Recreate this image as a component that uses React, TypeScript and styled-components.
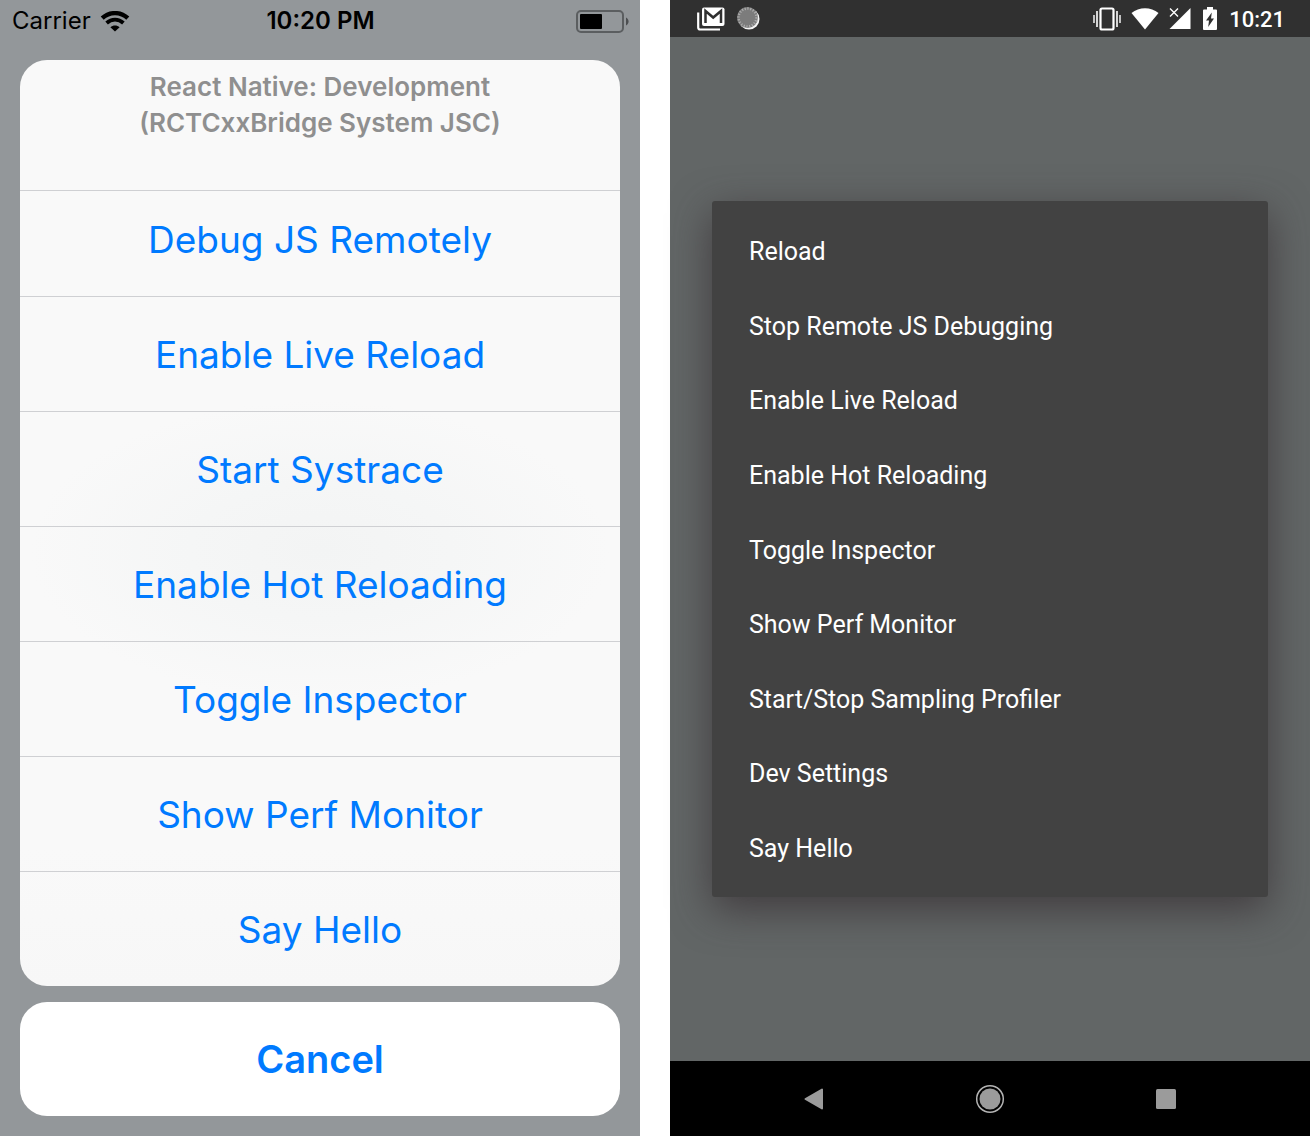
import React from "react";
import styled, { createGlobalStyle } from "styled-components";

const GlobalStyle = createGlobalStyle`
  *, *::before, *::after { box-sizing: border-box; }
  body { margin: 0; background: #fff; }
  button { margin: 0; padding: 0; border: 0; background: none; font: inherit; color: inherit; cursor: pointer; }
  h2, ul { margin: 0; padding: 0; font: inherit; list-style: none; }
  svg { display: block; flex: none; }
`;

const Page = styled.div`
  display: grid;
  grid-template-columns: 1fr 1fr;
  column-gap: 30px;
  min-height: 100vh;
`;

/* iOS */

const IosScreen = styled.section`
  display: flex;
  flex-direction: column;
  background: #93979a;
  color: #000;
  font-family: Inter, "Liberation Sans", sans-serif;
`;

const IosStatus = styled.header`
  display: grid;
  grid-template-columns: 1fr auto 1fr;
  align-items: center;
  height: 42px;
  padding: 0 11px 0 12px;
  margin-bottom: 18px;
  font-size: 24px;
  line-height: 42px;
`;

const Carrier = styled.div`
  display: flex;
  align-items: center;
  gap: 9px;
`;

const IosTime = styled.time`
  font-weight: 600;
`;

const BatterySlot = styled.div`
  justify-self: end;
`;

const Sheet = styled.div`
  display: flex;
  flex: 1;
  flex-direction: column;
  gap: 16px;
  padding: 0 20px 20px;
`;

const Actions = styled.div`
  display: flex;
  flex: 1;
  flex-direction: column;
  overflow: hidden;
  border-radius: 27px;
  background:
    radial-gradient(ellipse 290px 150px at 50% 53%, #f3f4f4 0%, #f5f6f6 45%, rgba(248, 248, 248, 0) 100%),
    linear-gradient(#f9f9f9 0%, #f9f9f9 85%, #f7f7f7 100%);
`;

const SheetTitle = styled.h2`
  min-height: 130px;
  padding: 9px 100px 0;
  color: #8f8f8f;
  font-size: 26px;
  font-weight: 600;
  line-height: 36px;
  text-align: center;
`;

const Action = styled.button<{ $first?: boolean }>`
  padding: ${(p) => (p.$first ? 25 : 34)}px 20px 32px;
  border-top: 1px solid #cfd0d3;
  color: #007aff;
  font-size: 37px;
  line-height: 48px;
  text-align: center;
`;

const Cancel = styled.button`
  padding: 33px 20px;
  border-radius: 27px;
  background: #fff;
  color: #007aff;
  font-size: 38px;
  font-weight: 600;
  line-height: 48px;
`;

/* Android */

const DroidScreen = styled.section`
  display: flex;
  flex-direction: column;
  background: #626666;
  color: #fff;
  font-family: Roboto, "Liberation Sans", sans-serif;
`;

const DroidStatus = styled.header`
  display: flex;
  align-items: center;
  justify-content: space-between;
  height: 37px;
  padding: 0 25px 0 27px;
  background: #303030;
`;

const IconRow = styled.div<{ $gap: number }>`
  display: flex;
  align-items: center;
  gap: ${(p) => p.$gap}px;
`;

const DroidTime = styled.time`
  padding-top: 3px;
  font-size: 22px;
  font-weight: 500;
  line-height: 34px;
`;

const Dialog = styled.ul`
  display: flex;
  flex: 1;
  flex-direction: column;
  margin: 164px 42px;
  padding: 14px 0 11px;
  border-radius: 3px;
  background: #424242;
  box-shadow: 0 12px 40px rgba(54, 46, 50, 0.75);
`;

const DialogRow = styled.li`
  display: flex;
  flex: 1;
`;

const DialogItem = styled.button`
  flex: 1;
  padding: 0 37px;
  font-size: 25px;
  line-height: 32px;
  text-align: left;
`;

const NavBar = styled.nav`
  display: flex;
  align-items: center;
  justify-content: center;
  gap: 146px;
  height: 75px;
  background: #000;
`;

const NavButton = styled.button`
  display: flex;
  align-items: center;
  justify-content: center;
  width: 30px;
  height: 48px;
`;

const IosWifi = () => (
  <svg width="30" height="21" viewBox="0 0 30 21" fill="none" stroke="#000" aria-hidden="true">
    <path d="M2.200 7.200C9.500.4 20.500.4 27.800 7.200" strokeWidth="4.400" />
    <path d="M6.600 12c4.900-4.500 11.900-4.500 16.800 0" strokeWidth="3.800" />
    <path d="M10.400 16.200c2.600-2.400 6.600-2.400 9.200 0L15 20.600z" fill="#000" stroke="none" />
  </svg>
);

const IosBattery = () => (
  <svg width="53" height="23" viewBox="0 0 53 23" aria-hidden="true">
    <rect x="1" y="1" width="46" height="21" rx="4" fill="none" stroke="#5b5e60" strokeWidth="2" />
    <rect x="4" y="4" width="22" height="15" rx="1" fill="#000" />
    <path d="M50 7.500c3.400 1.500 3.400 6.500 0 8z" fill="#4c4e50" />
  </svg>
);

const MailIcon = () => (
  <svg width="28" height="24" viewBox="0 0 28 24" aria-hidden="true">
    <path d="M1.200 5.500V20.500a2 2 0 0 0 2 2H23" fill="none" stroke="#fff" strokeWidth="2.200" />
    <rect x="5" y="0.500" width="22.500" height="18.500" rx="2" fill="#fff" />
    <path d="M8.500 16V4l7.700 6.500L24 4v12" fill="none" stroke="#303030" strokeWidth="2.500" />
  </svg>
);

const SyncIcon = () => (
  <svg width="23" height="23" viewBox="0 0 23 23" aria-hidden="true">
    <circle cx="12" cy="12" r="10.500" fill="#f4f4f4" />
    <circle cx="10.500" cy="10.500" r="10.500" fill="#7c7c7c" />
    <circle cx="10.500" cy="10.500" r="9" fill="none" stroke="#adadad" strokeWidth="2.500" strokeDasharray="1.200 1.600" />
  </svg>
);

const VibrateIcon = () => (
  <svg width="28" height="24" viewBox="0 0 28 24" fill="none" stroke="#fff" aria-hidden="true">
    <rect x="7.500" y="1.500" width="13" height="21" rx="1.500" strokeWidth="2.200" />
    <path d="M4 4v16M24 4v16" strokeWidth="1.600" />
    <path d="M1 8v8M27 8v8" strokeWidth="1.400" />
  </svg>
);

const DroidWifi = () => (
  <svg width="28" height="22" viewBox="0 0 28 22" fill="#fff" aria-hidden="true">
    <path d="M.5 5C8-1.400 20-1.400 27.500 5L14 21.500z" />
  </svg>
);

const SignalIcon = () => (
  <svg width="22" height="23" viewBox="0 0 22 23" aria-hidden="true">
    <path d="M21.500 1v21H.5z" fill="#fff" />
    <path d="M1 1.500l8 8M9 1.500l-8 8" stroke="#303030" strokeWidth="3.500" />
    <path d="M1 1.500l8 8M9 1.500l-8 8" stroke="#fff" strokeWidth="1.400" />
  </svg>
);

const ChargeIcon = () => (
  <svg width="14" height="23" viewBox="0 0 14 23" aria-hidden="true">
    <path d="M4 0h6v2.500h3a1 1 0 0 1 1 1V22a1 1 0 0 1-1 1H1a1 1 0 0 1-1-1V3.500a1 1 0 0 1 1-1h3z" fill="#fff" />
    <path d="M8.800 5.500L3 13.500h3L5.200 20 11 11.500H8z" fill="#303030" />
  </svg>
);

const iosActions = [
  "Debug JS Remotely",
  "Enable Live Reload",
  "Start Systrace",
  "Enable Hot Reloading",
  "Toggle Inspector",
  "Show Perf Monitor",
  "Say Hello",
];

const droidActions = [
  "Reload",
  "Stop Remote JS Debugging",
  "Enable Live Reload",
  "Enable Hot Reloading",
  "Toggle Inspector",
  "Show Perf Monitor",
  "Start/Stop Sampling Profiler",
  "Dev Settings",
  "Say Hello",
];

export default function App() {
  return (
    <>
      <GlobalStyle />
      <Page>
        <IosScreen>
          <IosStatus>
            <Carrier>
              Carrier
              <IosWifi />
            </Carrier>
            <IosTime>10:20 PM</IosTime>
            <BatterySlot>
              <IosBattery />
            </BatterySlot>
          </IosStatus>
          <Sheet>
            <Actions>
              <SheetTitle>
                React Native: Development
                <br />
                (RCTCxxBridge System JSC)
              </SheetTitle>
              {iosActions.map((label, i) => (
                <Action key={label} type="button" $first={i === 0}>
                  {label}
                </Action>
              ))}
            </Actions>
            <Cancel type="button">Cancel</Cancel>
          </Sheet>
        </IosScreen>
        <DroidScreen>
          <DroidStatus>
            <IconRow $gap={12}>
              <MailIcon />
              <SyncIcon />
            </IconRow>
            <IconRow $gap={12}>
              <IconRow $gap={10}>
                <VibrateIcon />
                <DroidWifi />
                <SignalIcon />
              </IconRow>
              <ChargeIcon />
              <DroidTime>10:21</DroidTime>
            </IconRow>
          </DroidStatus>
          <Dialog>
            {droidActions.map((label) => (
              <DialogRow key={label}>
                <DialogItem type="button">{label}</DialogItem>
              </DialogRow>
            ))}
          </Dialog>
          <NavBar>
            <NavButton type="button" aria-label="Back">
              <svg width="20" height="22" viewBox="0 0 20 22" aria-hidden="true">
                <path d="M1.500 11L18 1.500v19z" fill="#9b9b9b" stroke="#9b9b9b" strokeWidth="2" strokeLinejoin="round" />
              </svg>
            </NavButton>
            <NavButton type="button" aria-label="Home">
              <svg width="30" height="30" viewBox="0 0 30 30" aria-hidden="true">
                <circle cx="15" cy="15" r="13.300" fill="none" stroke="#b4b4b4" strokeWidth="1.500" />
                <circle cx="15" cy="15" r="10.500" fill="#9b9b9b" />
              </svg>
            </NavButton>
            <NavButton type="button" aria-label="Overview">
              <svg width="20" height="20" viewBox="0 0 20 20" aria-hidden="true">
                <rect width="20" height="20" rx="1.500" fill="#9b9b9b" />
              </svg>
            </NavButton>
          </NavBar>
        </DroidScreen>
      </Page>
    </>
  );
}
